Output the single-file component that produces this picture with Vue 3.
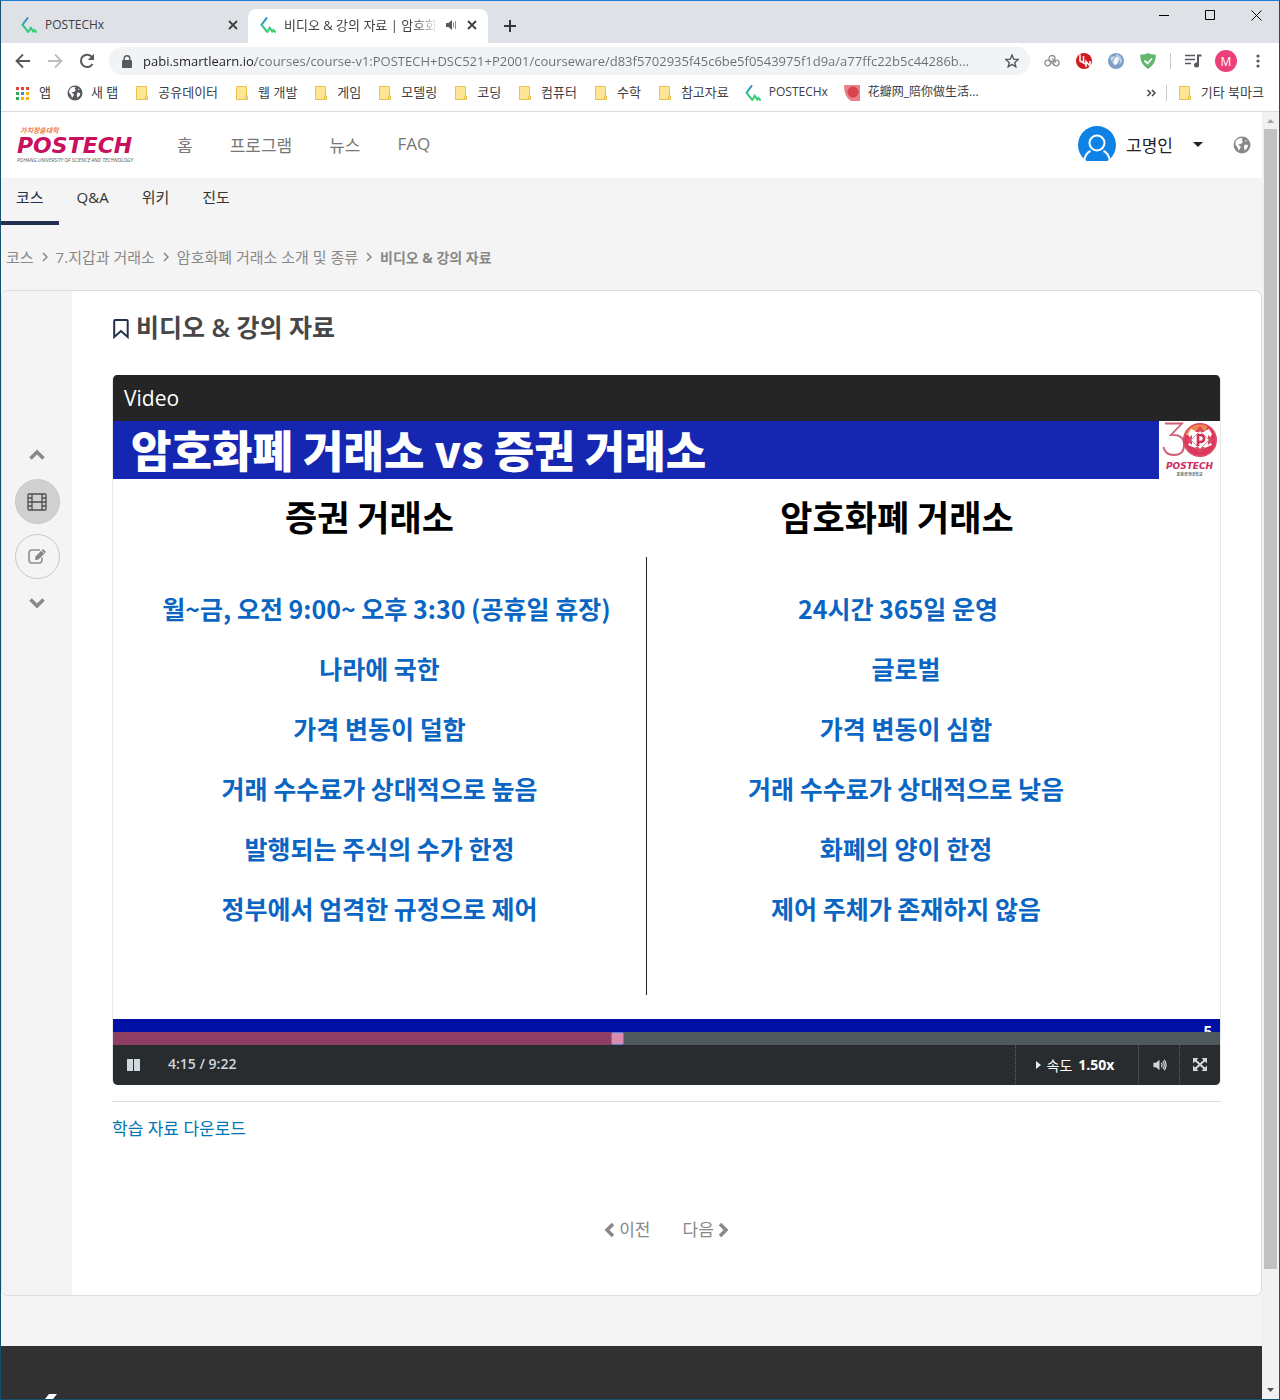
<script setup>
import { ref, computed } from 'vue'

const url = ref('pabi.smartlearn.io/courses/course-v1:POSTECH+DSC521+P2001/courseware/d83f5702935f45c6be5f0543975f1d9a/a77ffc22b5c44286b...')

const bookmarks = [
  { icon: 'apps', label: '앱' },
  { icon: 'globe', label: '새 탭' },
  { icon: 'folder', label: '공유데이터' },
  { icon: 'folder', label: '웹 개발' },
  { icon: 'folder', label: '게임' },
  { icon: 'folder', label: '모델링' },
  { icon: 'folder', label: '코딩' },
  { icon: 'folder', label: '컴퓨터' },
  { icon: 'folder', label: '수학' },
  { icon: 'folder', label: '참고자료' },
  { icon: 'site', label: 'POSTECHx', small: true },
  { icon: 'petal', label: '花瓣网_陪你做生活...', small: true },
]
const appColors = ['#ea4335', '#ea4335', '#ea4335', '#34a853', '#4285f4', '#f5b400', '#34a853', '#f5b400', '#f5b400']

const siteNav = ['홈', '프로그램', '뉴스', 'FAQ']
const courseTabs = ['코스', 'Q&A', '위키', '진도']
const crumbs = ['코스', '7.지갑과 거래소', '암호화폐 거래소 소개 및 종류']

const comparison = [
  ['월~금, 오전 9:00~ 오후 3:30 (공휴일 휴장)', '24시간 365일 운영'],
  ['나라에 국한', '글로벌'],
  ['가격 변동이 덜함', '가격 변동이 심함'],
  ['거래 수수료가 상대적으로 높음', '거래 수수료가 상대적으로 낮음'],
  ['발행되는 주식의 수가 한정', '화폐의 양이 한정'],
  ['정부에서 엄격한 규정으로 제어', '제어 주체가 존재하지 않음'],
]

const duration = 562
const position = ref(256)
const played = computed(() => `${(position.value / duration) * 100}%`)
</script>

<template>
  <svg class="defs" width="0" height="0" aria-hidden="true">
    <defs>
      <linearGradient id="site-grad" x1="0" y1="0" x2="0" y2="1">
        <stop offset="0" stop-color="#3484d0" />
        <stop offset=".55" stop-color="#2dbb9a" />
        <stop offset="1" stop-color="#36d65c" />
      </linearGradient>
      <symbol id="site" viewBox="0 0 16 16">
        <path d="M7 .5 1.500 7.800 7.300 15 9.800 10.800l2.400 3.700 1.100-1.500 2.400 2.500" fill="none" stroke="url(#site-grad)" stroke-width="2" />
      </symbol>
      <symbol id="folder" viewBox="0 0 14 16">
        <path d="M1.500 1.500h10v9l1 .5v3.500h-11z" fill="#ffe694" stroke="#e9c34b" />
        <path d="M10.500 14V11h2v3z" fill="#ffe694" stroke="#e9c34b" />
      </symbol>
      <symbol id="globe" viewBox="0 0 16 16">
        <circle cx="8" cy="8" r="7.500" fill="currentColor" />
        <path d="M2.500 4.500 5 2.200l3.500-.5L7.800 4 9 5 7 7 4.500 7.500 7 9.500 6 11.500l-1 1.500L4 10 2 7.500zM10.500 7.500l2.800.5-.5 2.500-2.300 2.300-.8-2.800zM11 3.500l1.500 1L11 5z" fill="#fff" />
      </symbol>
      <symbol id="speaker" viewBox="0 0 16 16">
        <path d="M1 5.500h3L8 2v12l-4-3.500H1z" fill="currentColor" />
        <path d="M10 5.500q2 2.500 0 5M11.800 3.500q3.400 4.500 0 9M13.500 2q4 6 0 12" fill="none" stroke="currentColor" stroke-width="1.400" />
      </symbol>
      <symbol id="cross" viewBox="0 0 10 10"><path d="m1 1 8 8M9 1 1 9" stroke="currentColor" stroke-width="1.800" /></symbol>
      <symbol id="chevron" viewBox="0 0 16 12"><path d="M1.500 9.500 8 3l6.500 6.500" fill="none" stroke="currentColor" stroke-width="3.500" /></symbol>
    </defs>
  </svg>

  <div class="window">
    <div class="tab-strip">
      <div class="tab">
        <svg class="i16"><use href="#site" /></svg>
        <span class="tab-title small">POSTECHx</span>
        <button class="tab-close" aria-label="탭 닫기"><svg class="i10"><use href="#cross" /></svg></button>
      </div>
      <div class="tab active">
        <svg class="i16"><use href="#site" /></svg>
        <span class="tab-title faded">비디오 &amp; 강의 자료 | 암호화폐</span>
        <svg class="i12 audio" viewBox="0 0 12 12"><path d="M1 4h2.500L7 1v10L3.500 8H1z" fill="#55585c" /><path d="M8.500 3.500v5M10.500 2v8" stroke="#8b8e92" /></svg>
        <button class="tab-close" aria-label="탭 닫기"><svg class="i10"><use href="#cross" /></svg></button>
      </div>
      <button class="new-tab" aria-label="새 탭"><svg width="12" height="12" viewBox="0 0 12 12"><path d="M6 0v12M0 6h12" stroke="#33363a" stroke-width="2" /></svg></button>
      <div class="window-buttons">
        <button aria-label="최소화"><svg width="11" height="11"><path d="M0 5.500h10" stroke="#000" /></svg></button>
        <button aria-label="최대화"><svg width="11" height="11"><path d="M.5.5h9v9h-9z" fill="none" stroke="#000" /></svg></button>
        <button aria-label="닫기"><svg width="11" height="11"><path d="m.5.500 10 10M10.500.500l-10 10" stroke="#000" /></svg></button>
      </div>
    </div>

    <div class="toolbar">
      <button aria-label="뒤로"><svg class="i16" viewBox="0 0 16 16"><path d="M15 8H2M8 1.500 1.500 8 8 14.500" fill="none" stroke="#55585c" stroke-width="1.800" /></svg></button>
      <button aria-label="앞으로"><svg class="i16" viewBox="0 0 16 16"><path d="M1 8h13M8 1.500 14.500 8 8 14.500" fill="none" stroke="#babcbe" stroke-width="1.800" /></svg></button>
      <button aria-label="새로고침"><svg class="i16" viewBox="0 0 16 16"><path d="M13.500 11A6.200 6.200 0 1 1 13 4" fill="none" stroke="#55585c" stroke-width="2" /><path d="M15 .8V7H8.800z" fill="#55585c" /></svg></button>
      <div class="omnibox">
        <svg width="10" height="13" viewBox="0 0 10 13"><path d="M1 5h8q1 0 1 1v6q0 1-1 1H1q-1 0-1-1V6q0-1 1-1z" fill="#55585c" /><path d="M2.200 5.500V3.500a2.800 2.800 0 0 1 5.600 0v2" fill="none" stroke="#55585c" stroke-width="1.400" /></svg>
        <input v-model="url" type="text" aria-label="주소창" spellcheck="false" />
        <button aria-label="북마크"><svg width="14" height="14" viewBox="0 0 14 14"><path d="m7 1 1.700 4.200 4.500.3-3.400 2.900 1 4.400L7 10.400l-3.800 2.400 1-4.400L.8 5.500l4.500-.3z" fill="none" stroke="#55585c" stroke-width="1.400" /></svg></button>
      </div>
      <div class="extensions">
        <svg class="i16" viewBox="0 0 16 16" fill="none" stroke="#909295" stroke-width="1.300"><circle cx="8" cy="5.500" r="3" /><circle cx="3.700" cy="10" r="2.800" /><circle cx="12.300" cy="10" r="2.800" /><path d="m8 5.500 4 4M6 8l4 4" /></svg>
        <svg class="i16" viewBox="0 0 16 16"><circle cx="8" cy="8" r="8" fill="#d11b20" /><path d="M4 1.500v6.500l3 1.500M7.500 3v7l3 1.500M10 14V8.500l4 4.500V8" fill="none" stroke="#fff" stroke-width="1.500" /></svg>
        <svg class="i16" viewBox="0 0 16 16"><circle cx="8" cy="8" r="8" fill="#7b9fc6" /><path d="M8 1a7 7 0 0 1 6 8l-3 3 1-4-4-4z" fill="#b8cee5" /><path d="M2 5q3-3 6-1-4 1-3.500 6z" fill="#c9daeb" /><ellipse cx="8" cy="8" rx="2.500" ry="4" transform="rotate(20 8 8)" fill="#f5f8fb" /></svg>
        <svg class="i16" viewBox="0 0 16 16"><path d="M8 0q4 2 7.700 1.500Q16.500 11 8 16-.5 11 .3 1.500 4 2 8 0z" fill="#62b76c" /><path d="m4.500 7.500 3 3 4.500-5" fill="none" stroke="#fff" stroke-width="1.800" /></svg>
      </div>
      <span class="rule"></span>
      <svg class="media" width="17" height="14" viewBox="0 0 17 14"><path d="M0 1.500h10M0 5.500h10M0 9.500h6" stroke="#55585c" stroke-width="1.600" /><path d="M16.500 1.500H13V11" fill="none" stroke="#55585c" stroke-width="2" /><circle cx="11.500" cy="11" r="2.500" fill="#55585c" /></svg>
      <button class="profile" aria-label="프로필">M</button>
      <button aria-label="메뉴"><svg width="4" height="14"><g fill="#55585c"><circle cx="2" cy="2" r="1.600" /><circle cx="2" cy="7" r="1.600" /><circle cx="2" cy="12" r="1.600" /></g></svg></button>
    </div>

    <nav class="bookmarks" aria-label="북마크">
      <a v-for="b in bookmarks" :key="b.label" href="#" :class="{ small: b.small }">
        <span v-if="b.icon === 'apps'" class="apps"><i v-for="(c, n) in appColors" :key="n" :style="{ background: c }"></i></span>
        <svg v-else-if="b.icon === 'petal'" class="i16" viewBox="0 0 16 16"><path d="M0 0h16v16H7Q0 12 0 0z" fill="#e98287" /><circle cx="9" cy="7" r="5.500" fill="#d9434d" /></svg>
        <svg v-else class="i16"><use :href="`#${b.icon}`" /></svg>
        <span>{{ b.label }}</span>
      </a>
      <button class="more" aria-label="북마크 더보기"><svg width="9" height="8" viewBox="0 0 9 8"><path d="m.5 1 3 3-3 3M5 1l3 3-3 3" fill="none" stroke="#444" stroke-width="1.500" /></svg></button>
      <span class="rule"></span>
      <a href="#"><svg class="i16"><use href="#folder" /></svg><span>기타 북마크</span></a>
    </nav>

    <div class="viewport">
      <div class="page">
        <header class="site-header">
          <a class="brand" href="#">
            <span class="brand-tag">가치창출대학</span>
            <span class="brand-name">POSTECH</span>
            <span class="brand-sub">POHANG UNIVERSITY OF SCIENCE AND TECHNOLOGY</span>
          </a>
          <nav class="site-nav"><a v-for="n in siteNav" :key="n" href="#">{{ n }}</a></nav>
          <div class="account">
            <svg width="38" height="38" viewBox="0 0 38 38"><circle cx="19" cy="19" r="19" fill="#0e82e5" /><path d="M7 35h24l-5 3H12z" fill="#fff" /><g fill="none" stroke="#fff" stroke-width="2"><circle cx="19" cy="17" r="7.500" /><path d="M6 35q1.500-8 6.500-10M32 35q-1.500-8-6.500-10" /></g></svg>
            <span>고명인</span>
            <button class="caret" aria-label="계정 메뉴"></button>
            <button class="lang" aria-label="언어"><svg width="18" height="18"><use href="#globe" /></svg></button>
          </div>
        </header>

        <nav class="course-tabs"><a v-for="(t, n) in courseTabs" :key="t" href="#" :class="{ current: n === 0 }">{{ t }}</a></nav>

        <nav class="crumbs" aria-label="위치">
          <template v-for="c in crumbs" :key="c">
            <a href="#">{{ c }}</a>
            <svg width="6" height="10" viewBox="0 0 6 10"><path d="m1 1 4 4-4 4" fill="none" stroke="#888" stroke-width="1.500" /></svg>
          </template>
          <strong>비디오 &amp; 강의 자료</strong>
        </nav>

        <div class="card">
          <aside class="sequence">
            <button class="arrow" aria-label="위로"><svg width="16" height="12"><use href="#chevron" /></svg></button>
            <button class="unit on" aria-label="비디오"><svg width="20" height="18" viewBox="0 0 20 18" fill="none" stroke="#4e4e4e" stroke-width="1.300"><rect x="1" y="1" width="18" height="16" rx="1" /><path d="M5 1v16M15 1v16M5 9h10M1 5h4M1 9h4M1 13h4M15 5h4M15 9h4M15 13h4" /></svg></button>
            <button class="unit" aria-label="과제"><svg width="19" height="17" viewBox="0 0 19 17"><path d="M12 2H4Q1 2 1 5v7q0 3 3 3h7q3 0 3-3V9.500" fill="none" stroke="#909090" stroke-width="1.600" /><path d="m7 12 .5-3.500L15 1l3 3-7.500 7.500z" fill="#858585" /><path d="m13.500 2.500 3 3" stroke="#f4f4f4" /></svg></button>
            <button class="arrow" aria-label="아래로"><svg class="flip" width="16" height="12"><use href="#chevron" /></svg></button>
          </aside>

          <main class="unit-body">
            <h2>
              <svg width="18" height="20" viewBox="0 0 18 20"><path d="M2.200 2q0-1 1-1h11.500q1 0 1 1v16l-6.700-6-6.800 6z" fill="none" stroke="#24304f" stroke-width="2" /></svg>
              비디오 &amp; 강의 자료
            </h2>

            <section class="player">
              <h3>Video</h3>
              <div class="slide">
                <div class="slide-head">
                  <div class="slide-title">암호화폐 거래소 vs 증권 거래소</div>
                  <div class="slide-logo">
                    <svg width="56" height="36" viewBox="0 0 56 36">
                      <path d="M3 1.500h17L9 13q13-1 13 10 0 10-10 10Q3 33 1.500 25" fill="none" stroke="#cf5d78" stroke-width="1.800" />
                      <circle cx="38" cy="18" r="16" fill="#dc365f" />
                      <path d="M23 12.500A16 16 0 0 1 46 4L38 18z" fill="#ee8a4e" />
                      <path d="m29 7 9 4 9-4 3 5-3 6 3 5-12 5-12-5 3-5-3-6z" fill="#fff" />
                      <path d="m38 4 5 6h-10zM24 18l6-5v10zM52 18l-6-5v10zM38 31l5-6h-10z" fill="#dc4a60" />
                      <path d="m38 9 9 9-9 9-9-9z" fill="#fff" stroke="#dc8a9c" />
                      <path d="M36 24V13h2q4 0 4 3.500T38 20h-2" fill="none" stroke="#d43157" stroke-width="2.600" />
                      <circle cx="38" cy="18" r="16.300" fill="none" stroke="#dc4a60" stroke-width="1.400" />
                    </svg>
                    <span class="mini-name">POSTECH</span>
                    <span class="mini-sub">포항공과대학교</span>
                  </div>
                </div>
                <div class="slide-body">
                  <div class="columns heading"><span>증권 거래소</span><span>암호화폐 거래소</span></div>
                  <div class="rows">
                    <div v-for="(r, n) in comparison" :key="n" class="columns"><span>{{ r[0] }}</span><span>{{ r[1] }}</span></div>
                  </div>
                </div>
                <div class="slide-foot">5</div>
              </div>
              <input v-model.number="position" class="seek" type="range" min="0" :max="duration" aria-label="재생 위치" :style="{ '--played': played }" />
              <div class="controls">
                <button class="pause" aria-label="일시정지"><svg width="13" height="12"><path d="M0 0h6v12H0zM7 0h6v12H7z" fill="#cfd8dc" /></svg></button>
                <span class="time">4:15 / 9:22</span>
                <button class="speed"><svg width="5" height="8"><path d="m0 0 5 4-5 4z" fill="#e7ecee" /></svg><span>속도</span><b>1.50x</b></button>
                <button class="square" aria-label="음량"><svg width="15" height="14"><use href="#speaker" /></svg></button>
                <button class="square" aria-label="전체 화면"><svg width="14" height="13" viewBox="0 0 14 13"><path d="m2 2 10 9M12 2 2 11" stroke="currentColor" stroke-width="2.200" /><path d="M0 0h5.500L0 5.500zM14 0v5.500L8.500 0zM0 13V7.500L5.500 13zM14 13H8.500L14 7.500z" fill="currentColor" /></svg></button>
              </div>
            </section>

            <div class="download"><a href="#">학습 자료 다운로드</a></div>

            <nav class="pager">
              <a href="#"><svg width="11" height="16" viewBox="0 0 11 16"><path d="M9 2 3 8l6 6" fill="none" stroke="currentColor" stroke-width="3.500" /></svg>이전</a>
              <a href="#">다음<svg width="11" height="16" viewBox="0 0 11 16"><path d="m2 2 6 6-6 6" fill="none" stroke="currentColor" stroke-width="3.500" /></svg></a>
            </nav>
          </main>
        </div>

        <footer class="site-footer"><svg width="12" height="5"><path d="M4 0h8L8 5H0z" fill="#fff" /></svg></footer>
      </div>

      <div class="scrollbar" aria-hidden="true">
        <svg width="7" height="4"><path d="M3.500 0 7 4H0z" fill="#a3a3a3" /></svg>
        <span class="thumb"></span>
        <svg width="7" height="4"><path d="M0 0h7L3.500 4z" fill="#505050" /></svg>
      </div>
    </div>
  </div>
</template>

<style>
body { margin: 0; }
</style>

<style scoped>
* { box-sizing: border-box; }
.defs { position: absolute; }
svg { display: block; flex: none; }
button { border: 0; padding: 0; margin: 0; background: none; font: inherit; color: inherit; display: flex; align-items: center; justify-content: center; }
a { color: inherit; text-decoration: none; }
h2, h3 { margin: 0; }
.i16 { width: 16px; height: 16px; }
.i12 { width: 12px; height: 12px; }
.i10 { width: 10px; height: 10px; }

.window {
  min-height: 100vh;
  display: flex;
  flex-direction: column;
  border: 1px solid #17506f;
  border-top-color: #1a7fd4;
  font-family: "Open Sans", "Noto Sans CJK KR", sans-serif;
  color: #3c4043;
  background: #fff;
}

.tab-strip { display: flex; height: 42px; padding-top: 8px; background: #dee1e6; }
.tab { display: flex; align-items: center; width: 247px; padding: 0 7px 0 20px; font-size: 13px; line-height: 30px; padding-bottom: 2px; }
.tab.active { width: 240px; padding-left: 12px; padding-right: 8px; background: #fff; border-radius: 8px 8px 0 0; }
.tab-title { flex: 1; margin-left: 8px; white-space: nowrap; overflow: hidden; }
.tab-title.faded { -webkit-mask-image: linear-gradient(90deg, #000 130px, transparent 154px); mask-image: linear-gradient(90deg, #000 130px, transparent 154px); }
.small { font-size: 12px; }
.audio { margin: 0 7px 0 8px; }
.tab-close { width: 16px; height: 16px; }
.new-tab { width: 44px; }
.window-buttons { display: flex; margin-left: auto; height: 12px; gap: 35px; padding-right: 17px; }

.toolbar { display: flex; align-items: center; height: 36px; padding: 0 19px 0 14px; gap: 16px; }
.omnibox { flex: 1; display: flex; align-items: center; height: 28px; margin: 0 -2px; padding: 0 11px 0 13px; border-radius: 14px; background: #f1f3f4; }
.omnibox input {
  flex: 1;
  min-width: 0;
  margin: 0 12px 0 11px;
  padding: 0;
  border: 0;
  outline: 0;
  font: 13px/20px "Open Sans", sans-serif;
  color: transparent;
  background: linear-gradient(90deg, #202124 112px, #6a6e73 112px);
  -webkit-background-clip: text;
  background-clip: text;
}
.extensions { display: flex; gap: 16px; }
.rule { width: 1px; height: 16px; background: #c8cacd; }
.extensions + .rule { margin: 0 -2px; }
.media { margin-right: -3px; }
.profile { width: 22px; height: 22px; margin-right: 3px; border-radius: 50%; background: #ec407a; color: #fff; font-size: 12px; }

.bookmarks { display: flex; align-items: center; height: 33px; padding: 0 15px 4px; gap: 16px; border-bottom: 1px solid #dadce0; font-size: 13px; line-height: 20px; white-space: nowrap; }
.bookmarks a { display: flex; align-items: center; gap: 8px; }
.bookmarks a > span:last-child { padding-bottom: 2px; }
.apps { display: grid; grid-template-columns: repeat(3, 3px); gap: 2px; width: 15px; }
.apps i { height: 3px; }
.more { margin-left: auto; }
.bookmarks .rule { margin: 0 -6px; }
.bookmarks svg { color: #55585c; }

.viewport { flex: 1; display: flex; }
.page { flex: 1; min-width: 0; display: flex; flex-direction: column; background: #f4f4f4; }
.scrollbar { width: 17px; display: flex; flex-direction: column; align-items: center; padding: 7px 0; background: #f1f1f1; }
.thumb { width: 13px; height: 1140px; margin: 6px 0 auto; background: #c1c1c1; }

.site-header { display: flex; align-items: center; height: 66px; padding: 0 11px 1px 16px; background: #fff; color: #777; font-size: 17px; }
.brand { width: 132px; display: flex; flex-direction: column; font-style: italic; white-space: nowrap; }
.brand-tag { padding-left: 3px; font-size: 7px; line-height: 10px; font-weight: 700; color: #ef7d3c; }
.brand-name { font: italic 700 22px/20px "DejaVu Sans", sans-serif; color: #c9105f; }
.brand-sub { font-size: 5px; line-height: 8px; color: #555; }
.site-nav { display: flex; gap: 37px; padding-left: 28px; }
.account { display: flex; align-items: center; margin-left: auto; color: #222; }
.account span { margin: 0 20px 0 10px; }
.caret { border: 5px solid transparent; border-top-color: #222; border-bottom: 0; }
.lang { margin-left: 30px; color: #888; }

.course-tabs { display: flex; gap: 3px; height: 47px; font-size: 15px; color: #333; }
.course-tabs a { padding: 7px 15px 0; line-height: 24px; }
.course-tabs .current { border-bottom: 4px solid #24304f; color: #24304f; }

.crumbs { display: flex; align-items: center; gap: 8px; height: 65px; padding: 0 5px 2px; font-size: 15px; color: #888; }
.crumbs strong { font-size: 14px; font-weight: 700; }

.card { display: flex; border: 1px solid #ddd; border-radius: 7px; overflow: hidden; background: #fff; }
.sequence { width: 70px; display: flex; flex-direction: column; align-items: center; gap: 10px; padding-top: 150px; background: #f4f4f4; color: #888; }
.arrow { height: 28px; }
.flip { transform: rotate(180deg); }
.unit { width: 45px; height: 45px; border: 1px solid #c8c8c8; border-radius: 50%; }
.unit.on { background: #d0d0d0; }
.unit-body { flex: 1; min-width: 0; padding: 16px 40px 45px; }
h2 { display: flex; align-items: center; gap: 6px; height: 38px; font-size: 25px; font-weight: 600; color: #474747; }
h2 svg { margin-top: 6px; }

.player { margin-top: 30px; border: solid #e8e8e8; border-width: 0 1px; border-radius: 5px; overflow: hidden; }
h3 { height: 46px; padding: 0 11px; background: #252525; color: #fff; font-size: 21px; font-weight: 400; line-height: 46px; }
.slide { font-family: "Noto Sans CJK KR", sans-serif; font-weight: 700; background: #fff; }
.slide-head { display: flex; height: 58px; }
.slide-title { flex: 1; padding-left: 18px; background: #1526b0; color: #fff; font-size: 44px; line-height: 56px; font-weight: 900; white-space: nowrap; }
.slide-logo { width: 61px; display: flex; flex-direction: column; align-items: center; padding-top: 1px; }
.mini-name { margin-top: 4px; font: italic 700 9px/8px "DejaVu Sans", sans-serif; color: #d02a5e; }
.mini-sub { font-size: 4px; line-height: 8px; color: #666; }
.slide-body { height: 540px; padding-top: 12px; background: linear-gradient(#222, #222) 533px 78px / 1px 438px no-repeat; }
.columns { display: grid; grid-template-columns: 533px 1fr; text-align: center; white-space: nowrap; }
.columns span:last-child { padding-right: 54px; }
.heading { font-size: 35px; line-height: 50px; color: #000; }
.columns.heading span:first-child { padding-right: 20px; }
.columns.heading span:last-child { padding-right: 72px; }
.rows { display: grid; grid-auto-rows: 60px; margin-top: 37px; font-size: 25px; line-height: 60px; color: #0b66c3; }
.rows .columns:first-child span:first-child { padding-left: 14px; }
.rows .columns:first-child span:last-child { padding-right: 70px; }
.slide-foot { height: 13px; padding-right: 8px; overflow: hidden; background: #0010a5; color: #fff; font-size: 15px; line-height: 24px; text-align: right; }

.seek { display: block; width: 100%; height: 13px; margin: 0; appearance: none; background: linear-gradient(90deg, #8e3e63 var(--played), #4f595d var(--played)); }
.seek::-webkit-slider-thumb { appearance: none; width: 13px; height: 13px; border: 1px solid #5b7fd0; border-radius: 2px; background: #db8baf; }
.controls { display: flex; align-items: center; height: 40px; padding-bottom: 1px; background: #282c2e; color: #cfd8dc; font-size: 14px; }
.pause { width: 41px; }
.time { margin: 0 auto 2px 14px; font-weight: 600; }
.controls button { height: 39px; }
.speed, .square { border-left: 1px dotted #5d6467; }
.controls .speed { width: 123px; padding-right: 4px; gap: 6px; color: #fff; }
.square { width: 41px; }

.download { margin-top: 16px; padding-top: 12px; border-top: 1px solid #ddd; font-size: 17px; line-height: 30px; color: #0075b4; }
.pager { display: flex; justify-content: center; gap: 32px; margin-top: 71px; line-height: 30px; padding-bottom: 5px; font-size: 17px; color: #888; }
.pager a { display: flex; align-items: center; gap: 4px; }

.site-footer { flex: 1; display: flex; align-items: flex-end; min-height: 53px; margin-top: 50px; padding-left: 44px; background: #313131; }
</style>
